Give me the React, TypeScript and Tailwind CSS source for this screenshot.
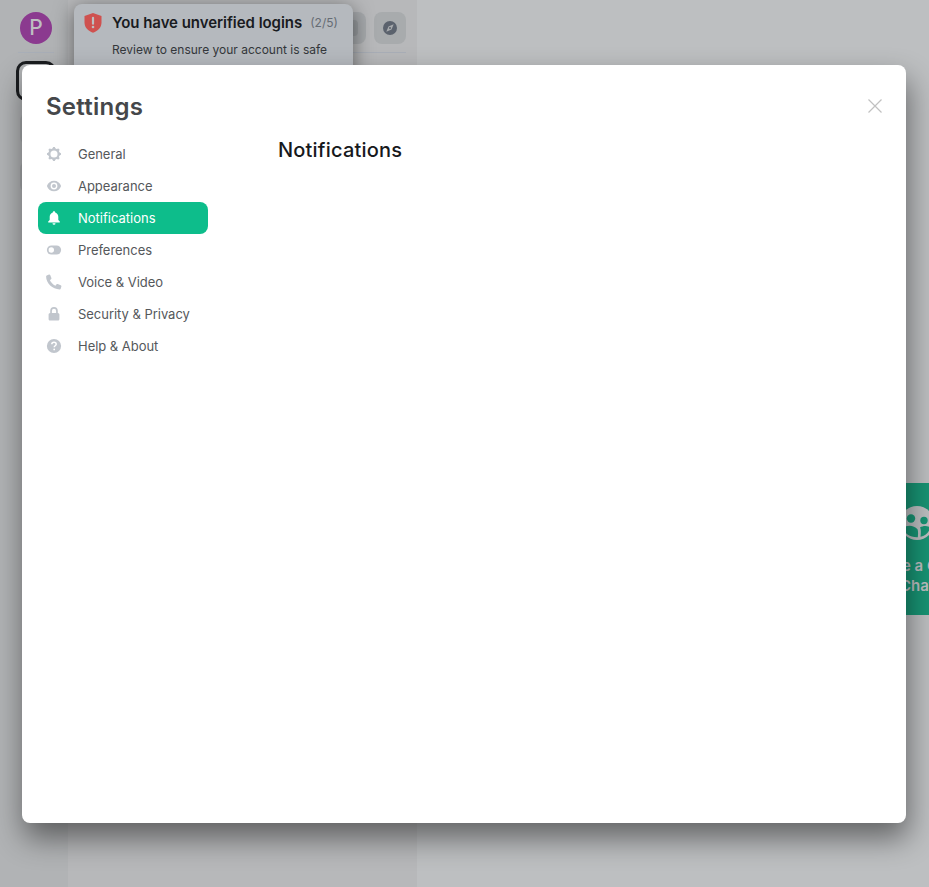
import React from "react";

type IconProps = { children: React.ReactNode };

function Icon({ children }: IconProps) {
  return (
    <svg width="16" height="16" viewBox="0 0 16 16" fill="currentColor" className="shrink-0">
      {children}
    </svg>
  );
}

const gear = (
  <Icon>
    <circle cx="8" cy="8" r="4.600" fill="none" stroke="currentColor" strokeWidth="2.100" />
    {[0, 45, 90, 135, 180, 225, 270, 315].map((a) => (
      <path key={a} d="M6 3.400 7.200 1h1.600L10 3.400Z" transform={`rotate(${a} 8 8)`} />
    ))}
  </Icon>
);
const eye = (
  <Icon>
    <path fillRule="evenodd" d="M8 2.700C4.800 2.700 2 4.700.9 8 2 11.300 4.800 13.300 8 13.300s6-2 7.100-5.300C14 4.700 11.200 2.700 8 2.700Zm0 1.900a3.400 3.400 0 1 1 0 6.800 3.400 3.400 0 0 1 0-6.800Z" />
    <circle cx="8" cy="8" r="2" />
  </Icon>
);
const bell = (
  <Icon>
    <path d="M8 1.200c-.8 0-1.200.5-1.200 1.200C4.700 3 3.700 4.700 3.700 6.800V10L2.200 11.500v.9h11.600v-.9L12.300 10V6.800c0-2.100-1-3.800-3.100-4.400 0-.7-.4-1.200-1.200-1.200ZM6.500 13.200a1.500 1.500 0 0 0 3 0Z" />
  </Icon>
);
const toggle = (
  <Icon>
    <rect x="0.900" y="3.500" width="14.200" height="9" rx="4.500" />
    <circle cx="5.300" cy="8" r="2.700" fill="white" />
  </Icon>
);
const phone = (
  <Icon>
    <path d="M.7 1.500 3 .5c.5-.2 1 0 1.200.5l1.200 3c.2.400.1.800-.2 1.100L3.900 6.300c1 2.200 3 4.200 5.500 5.500l1.200-1.500c.3-.4.7-.4 1.100-.3l3 1.300c.6.200.8.700.7 1.200l-.7 2.200c-.2.500-.5.700-1 .7C6.500 15.400.1 9 .1 2.500c0-.5.200-.8.600-1Z" />
  </Icon>
);
const lock = (
  <Icon>
    <path fillRule="evenodd" d="M4.200 7V4.900a3.800 3.800 0 0 1 7.600 0V7c1 .1 1.600.6 1.600 1.500V13c0 1-.6 1.600-1.600 1.600H4.200c-1 0-1.600-.6-1.600-1.600V8.500c0-.9.600-1.400 1.600-1.500Zm1.700 0h4.200V4.900a2.100 2.100 0 0 0-4.200 0V7Z" />
  </Icon>
);
const help = (
  <Icon>
    <circle cx="8" cy="8" r="7.100" />
    <path d="M5.800 6.300c0-1.300.9-2 2.200-2s2.200.8 2.200 1.900c0 1.500-2 1.600-2 3" fill="none" stroke="white" strokeWidth="1.500" />
    <circle cx="8.200" cy="11.400" r=".9" fill="white" />
  </Icon>
);

const tabs = [
  { label: "General", icon: gear },
  { label: "Appearance", icon: eye },
  { label: "Notifications", icon: bell, active: true },
  { label: "Preferences", icon: toggle },
  { label: "Voice & Video", icon: phone },
  { label: "Security & Privacy", icon: lock },
  { label: "Help & About", icon: help },
];

function SpacePanel() {
  return (
    <aside className="flex w-[68px] shrink-0 flex-col items-center bg-[#b1b3b5] pl-1">
      <div className="mt-3 flex size-8 shrink-0 items-center justify-center rounded-full bg-[#8b3a8f] text-[21px] font-medium leading-8 text-[#bdbfc1]">P</div>
      <div className="mt-2 h-px w-9 shrink-0 bg-[#a9afb8]" />
      <div className="mt-2 size-10 shrink-0 rounded-[10px] border-3 border-[#1b1d20]" />
      <div className="mt-3 size-8 shrink-0 rounded-lg bg-[#a5a7a9]" />
      <div className="mt-4 size-8 shrink-0 rounded-lg bg-[#a5a7a9]" />
    </aside>
  );
}

function RoomList() {
  return (
    <section className="w-[349px] shrink-0 bg-[#b7b8ba] px-[11px] pt-3">
      <div className="flex justify-end gap-2 border-b border-[#a9afb8] pb-2">
        <div className="flex size-8 items-center justify-center rounded-lg bg-[#a6a9ac]">
          <div className="size-4 rounded bg-[#989c9f]" />
        </div>
        <div className="flex size-8 items-center justify-center rounded-lg bg-[#a8abad]">
          <svg width="14" height="14" viewBox="0 0 14 14">
            <circle cx="7" cy="7" r="7" fill="#5b626d" />
            <path d="M10.700 3.300 8.500 8.500 3.300 10.700 5.500 5.500Z" fill="#a8abad" />
            <circle cx="7" cy="7" r="1" fill="#5b626d" />
          </svg>
        </div>
      </div>
    </section>
  );
}

function Welcome() {
  return (
    <main className="flex flex-1 flex-col items-end overflow-hidden bg-[#bdbfc1] pt-[483px]">
      <div className="-mr-[68px] flex h-[132px] w-40 shrink-0 flex-col items-center bg-[#189474] pt-[22px] text-[15px] font-semibold leading-5 text-[#bdbfc1]">
        <svg width="36" height="36" viewBox="0 0 36 36" className="mb-[15px] shrink-0">
          <circle cx="18" cy="18" r="17" fill="#bdbfc1" />
          <circle cx="12" cy="13.500" r="4.200" fill="#189474" />
          <circle cx="25" cy="15.500" r="3.700" fill="#189474" />
          <path d="M4 23c4-3.500 11-3 14.500 1.200.8 2 .6 5.500.3 8C11 32.500 6 29 4 23ZM21.500 31.700c.5-4.500.5-7.500-.5-9.200 3-2 7-2 10.500-.2-1.500 5-5 8.500-10 9.400Z" fill="#189474" />
        </svg>
        <span className="whitespace-nowrap">Create a Group</span>
        <span>Chat</span>
      </div>
    </main>
  );
}

function Toast() {
  return (
    <div className="absolute left-[74px] top-1 flex h-[90px] w-[279px] gap-2 rounded-lg bg-[#b5b9be] pl-[9px] pt-2 shadow-[0_4px_20px_rgba(0,0,0,0.5)]">
      <svg width="20" height="22" viewBox="0 0 20 22" className="shrink-0">
        <path d="M10 1 18.500 4v6.500c0 5-3.500 8.300-8.500 10.200-5-1.900-8.500-5.200-8.500-10.200V4Z" fill="#cf514f" />
        <path d="M10 5.800v5.900" stroke="#bdbfc1" strokeWidth="2.200" strokeLinecap="round" />
        <circle cx="10" cy="15" r="1.300" fill="#bdbfc1" />
      </svg>
      <div className="pl-[1px]">
        <div className="flex h-[22px] items-center whitespace-nowrap text-[15px] font-semibold tracking-[-0.04px] text-[#191b1f]">
          You have unverified logins
          <span className="ml-2 text-xs font-normal tracking-normal text-[#666c74]">(2/5)</span>
        </div>
        <p className="mt-1 whitespace-nowrap text-xs leading-6 text-[#34373b]">Review to ensure your account is safe</p>
      </div>
    </div>
  );
}

function SettingsDialog() {
  return (
    <div role="dialog" className="absolute left-[22px] top-[65px] h-[758px] w-[884px] rounded-lg bg-white shadow-[2px_15px_30px_0_rgba(0,0,0,0.48)]">
      <header className="flex h-[73px] items-start justify-between px-6 pt-6">
        <h1 className="text-2xl font-semibold leading-9 tracking-[0.25px] text-[#45474a]">Settings</h1>
        <svg width="14" height="14" viewBox="0 0 14 14" className="mt-[10px]">
          <path d="M.5.500 13.500 13.500M13.500.500.500 13.500" stroke="#c1c1c1" strokeWidth="1.200" />
        </svg>
      </header>
      <div className="flex pl-4">
        <nav className="w-[170px]">
          {tabs.map((tab) => (
            <div
              key={tab.label}
              className={
                tab.active
                  ? "flex h-8 items-center gap-4 rounded-lg bg-[#0dbd8b] pl-2 text-[13px] text-white"
                  : "flex h-8 items-center gap-4 pl-2 text-[13px] text-[#c1c6cd]"
              }
            >
              {tab.icon}
              <span className={tab.active ? "pt-0.5 text-white" : "pt-0.5 tracking-[-0.03px] text-[#55585b]"}>{tab.label}</span>
            </div>
          ))}
        </nav>
        <h2 className="ml-[70px] text-xl font-medium leading-6 tracking-[0.2px] text-[#17191c]">Notifications</h2>
      </div>
    </div>
  );
}

export default function App() {
  return (
    <div className="relative flex h-screen overflow-hidden font-['Inter',sans-serif]">
      <SpacePanel />
      <RoomList />
      <Welcome />
      <Toast />
      <SettingsDialog />
    </div>
  );
}
